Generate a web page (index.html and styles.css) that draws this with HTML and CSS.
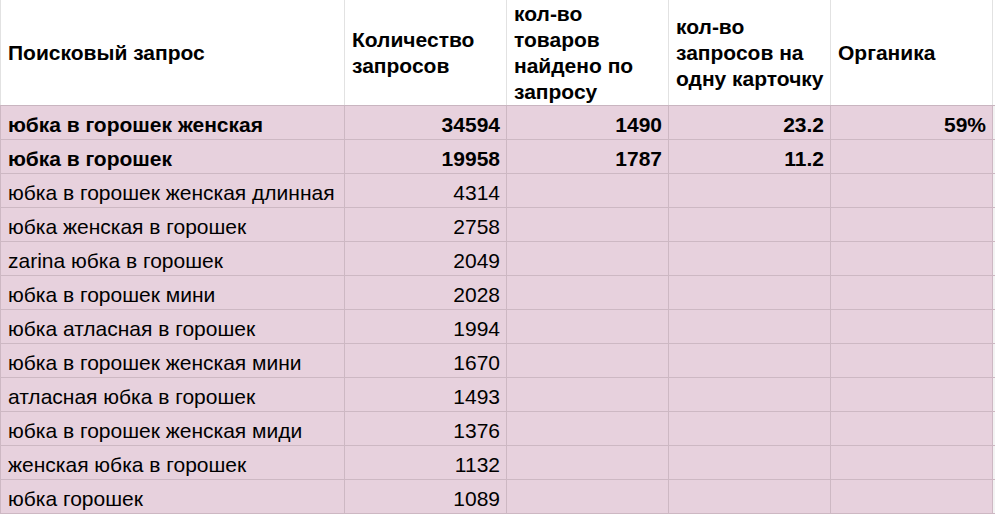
FILE: index.html
```html
<!DOCTYPE html>
<html lang="ru">
<head>
<meta charset="utf-8">
<link rel="stylesheet" href="styles.css">
</head>
<body>
<table class="sheet">
  <colgroup>
    <col class="c-query">
    <col class="c-num">
    <col class="c-num">
    <col class="c-num3">
    <col class="c-num">
    <col class="c-rest">
  </colgroup>
  <thead>
    <tr class="head">
      <th>Поисковый запрос</th>
      <th>Количество запросов</th>
      <th>кол-во товаров найдено по запросу</th>
      <th>кол-во запросов на одну карточку</th>
      <th>Органика</th>
      <th class="rest"></th>
    </tr>
  </thead>
  <tbody>
    <tr class="row bold"><td>юбка в горошек женская</td><td class="n">34594</td><td class="n">1490</td><td class="n">23.2</td><td class="n">59%</td><td class="rest"></td></tr>
    <tr class="row bold"><td>юбка в горошек</td><td class="n">19958</td><td class="n">1787</td><td class="n">11.2</td><td class="n"></td><td class="rest"></td></tr>
    <tr class="row"><td>юбка в горошек женская длинная</td><td class="n">4314</td><td></td><td></td><td></td><td class="rest"></td></tr>
    <tr class="row"><td>юбка женская в горошек</td><td class="n">2758</td><td></td><td></td><td></td><td class="rest"></td></tr>
    <tr class="row"><td>zarina юбка в горошек</td><td class="n">2049</td><td></td><td></td><td></td><td class="rest"></td></tr>
    <tr class="row"><td>юбка в горошек мини</td><td class="n">2028</td><td></td><td></td><td></td><td class="rest"></td></tr>
    <tr class="row"><td>юбка атласная в горошек</td><td class="n">1994</td><td></td><td></td><td></td><td class="rest"></td></tr>
    <tr class="row"><td>юбка в горошек женская мини</td><td class="n">1670</td><td></td><td></td><td></td><td class="rest"></td></tr>
    <tr class="row"><td>атласная юбка в горошек</td><td class="n">1493</td><td></td><td></td><td></td><td class="rest"></td></tr>
    <tr class="row"><td>юбка в горошек женская миди</td><td class="n">1376</td><td></td><td></td><td></td><td class="rest"></td></tr>
    <tr class="row"><td>женская юбка в горошек</td><td class="n">1132</td><td></td><td></td><td></td><td class="rest"></td></tr>
    <tr class="row"><td>юбка горошек</td><td class="n">1089</td><td></td><td></td><td></td><td class="rest"></td></tr>
  </tbody>
</table>
</body>
</html>
```

FILE: styles.css
```css
html, body {
  margin: 0;
  padding: 0;
  background: #ffffff;
}

.sheet {
  border-collapse: collapse;
  table-layout: fixed;
  width: 1000px;
  font-family: "Liberation Sans", Arial, sans-serif;
  font-size: 21px;
  color: #000;
}

.c-query { width: 344px; }
.c-num { width: 162px; }
.c-num3 { width: 162px; }
.c-rest { width: 8px; }

.head th {
  height: 105px;
  padding: 0 6px 0 7px;
  text-align: left;
  vertical-align: middle;
  font-weight: bold;
  line-height: 26px;
  border-left: 1px solid #e2e2e2;
  border-right: 1px solid #e2e2e2;
  border-bottom: 1px solid #c9b5c0;
  background: #ffffff;
}

.row td {
  height: 30px;
  padding: 0 6px 3px 7px;
  vertical-align: bottom;
  line-height: 22px;
  background: #e7d1dd;
  border: 1px solid #cdb8c3;
  white-space: nowrap;
  overflow: hidden;
}

.row td.n {
  text-align: right;
}

.row.bold td {
  font-weight: bold;
}

.sheet .rest {
  background: #f3f3f3;
  border-right: none;
}

.head th.rest {
  background: #ffffff;
}
```
